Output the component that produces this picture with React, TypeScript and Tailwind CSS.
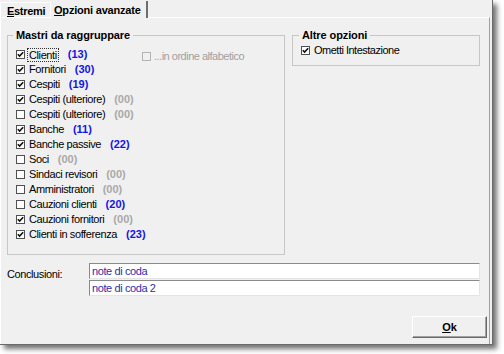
import React from 'react';

type Item = { label: string; checked: boolean; count: string };

const items: Item[] = [
  { label: 'Clienti', checked: true, count: '13' },
  { label: 'Fornitori', checked: true, count: '30' },
  { label: 'Cespiti', checked: true, count: '19' },
  { label: 'Cespiti (ulteriore)', checked: true, count: '00' },
  { label: 'Cespiti (ulteriore)', checked: false, count: '00' },
  { label: 'Banche', checked: true, count: '11' },
  { label: 'Banche passive', checked: true, count: '22' },
  { label: 'Soci', checked: false, count: '00' },
  { label: 'Sindaci revisori', checked: false, count: '00' },
  { label: 'Amministratori', checked: false, count: '00' },
  { label: 'Cauzioni clienti', checked: false, count: '20' },
  { label: 'Cauzioni fornitori', checked: true, count: '00' },
  { label: 'Clienti in sofferenza', checked: true, count: '23' },
];

const CheckBox: React.FC<{ checked?: boolean; disabled?: boolean }> = ({ checked, disabled }) => (
  <span
    className={
      disabled
        ? 'w-[9px] h-[9px] border border-[#b4b4b4] bg-[#f0f0f0] shrink-0 flex items-center justify-center'
        : 'w-[9px] h-[9px] border border-[#505050] bg-white shrink-0 flex items-center justify-center'
    }
  >
    {checked && (
      <svg width="7" height="7" viewBox="0 0 7 7">
        <path d="M0.8 3.2 L2.6 5 L6.2 1.2" stroke="#111" strokeWidth="1.6" fill="none" />
      </svg>
    )}
  </span>
);

const App: React.FC = () => {
  return (
    <div className="w-[504px] h-[354px] bg-white font-['Liberation_Sans',Arial,sans-serif] text-[11px] text-black">
      <div className="w-[493px] h-[345px] bg-[#f0f0f0] flex flex-col border-r border-b border-[#6a6a6a] shadow-[4px_4px_5px_rgba(0,0,0,0.55)]">
        {/* tabs */}
        <div className="h-[17px] flex items-end shrink-0">
          <div className="h-[15px] w-[50px] border-t border-l border-white flex items-center pl-[6px] font-bold tracking-[-0.3px] pt-[2px]">
            <span><span className="underline">E</span>stremi</span>
          </div>
          <div className="h-[17px] w-[98px] border-l border-white border-r-2 border-r-[#6e6e6e] flex items-start pl-[3px] pt-[1px] font-bold tracking-[-0.2px] relative z-10 -mb-[1px] bg-[#f0f0f0]">
            <span><span className="underline">O</span>pzioni avanzate</span>
          </div>
        </div>

        {/* panel */}
        <div className="flex-1 flex flex-col border-t border-l border-white mr-[2px] border-r border-r-[#a0a0a0]">
          <div className="flex gap-[7px] pl-[6px] mt-[11px]">
            <fieldset className="w-[278px] h-[226px] border border-[#c6c6c6] pl-[8px]">
              <legend className="font-bold px-[3px] -ml-[3px] leading-[13px] tracking-[-0.1px]">Mastri da raggruppare</legend>
              <div className="flex pt-[5px]">
                <div className="w-[126px] shrink-0 flex flex-col">
                  {items.map((it, i) => (
                    <div key={i} className="h-[15px] flex items-center whitespace-nowrap tracking-[-0.4px]">
                      <CheckBox checked={it.checked} />
                      {i === 0 ? (
                        <span className="ml-[2px] border border-dotted border-[#333] px-[1px] leading-[12px]">{it.label}</span>
                      ) : (
                        <span className="ml-[4px]">{it.label}</span>
                      )}
                      <span
                        className={
                          it.count === '00'
                            ? 'ml-[9px] font-bold text-[#a9a9a9] tracking-[0px]'
                            : 'ml-[9px] font-bold text-[#1414e6] tracking-[0px]'
                        }
                      >
                        ({it.count})
                      </span>
                    </div>
                  ))}
                </div>
                <div className="flex items-center gap-[3px] mt-[2px] h-[15px] text-[#a0a0a0] whitespace-nowrap tracking-[-0.5px]">
                  <CheckBox disabled />
                  <span>...in ordine alfabetico</span>
                </div>
              </div>
            </fieldset>

            <fieldset className="w-[188px] h-[37px] border border-[#c6c6c6] pl-[8px]">
              <legend className="font-bold px-[3px] -ml-[2px] leading-[13px] tracking-[-0.1px]">Altre opzioni</legend>
              <div className="flex items-center gap-[4px] h-[15px] mt-[1px] tracking-[-0.5px]">
                <CheckBox checked />
                <span>Ometti Intestazione</span>
              </div>
            </fieldset>
          </div>

          <div className="flex mt-[8px] pl-[6px]">
            <div className="w-[82px] pt-[3px] tracking-[-0.4px]">Conclusioni:</div>
            <div className="w-[391px] flex flex-col gap-[1px]">
              <div className="h-[16px] bg-white border-t border-l border-[#8a8a8a] border-r border-b border-r-[#e4e4e4] border-b-[#e4e4e4] flex items-center pl-[2px] text-[#2e2ea8] tracking-[-0.4px]">
                note di coda
              </div>
              <div className="h-[16px] bg-white border-t border-l border-[#8a8a8a] border-r border-b border-r-[#e4e4e4] border-b-[#e4e4e4] flex items-center pl-[2px] text-[#2e2ea8] tracking-[-0.4px]">
                note di coda 2
              </div>
            </div>
          </div>

          <div className="flex justify-end mt-[20px] pr-[2px]">
            <button className="w-[75px] h-[22px] bg-[#f0f0f0] border-t border-l border-white border-r border-b border-r-[#6a6a6a] border-b-[#6a6a6a] shadow-[inset_-1px_-1px_0_#a0a0a0] font-bold flex items-center justify-center">
              <span><span className="underline">O</span>k</span>
            </button>
          </div>
        </div>
      </div>
    </div>
  );
};

export default App;
